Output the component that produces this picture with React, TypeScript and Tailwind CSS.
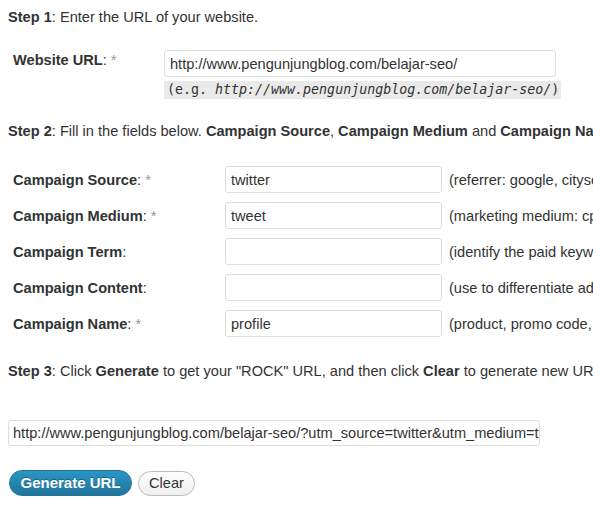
import React from "react";

const rows = [
  { label: "Campaign Source", req: true, value: "twitter", hint: "(referrer: google, citysearch, newsletter4)" },
  { label: "Campaign Medium", req: true, value: "tweet", hint: "(marketing medium: cpc, banner, email)" },
  { label: "Campaign Term", req: false, value: "", hint: "(identify the paid keywords)" },
  { label: "Campaign Content", req: false, value: "", hint: "(use to differentiate ads)" },
  { label: "Campaign Name", req: true, value: "profile", hint: "(product, promo code, or slogan)" },
];

export default function App() {
  return (
    <div
      className="w-[593px] h-[505px] overflow-hidden bg-white text-[14.6px] text-[#333] whitespace-nowrap"
      style={{ fontFamily: '"Liberation Sans", Arial, sans-serif' }}
    >
      <div className="pl-2 pt-[7px]">
        <p className="leading-5">
          <b>Step 1</b>: Enter the URL of your website.
        </p>

        <div className="flex mt-[23px]">
          <div className="w-[156px] shrink-0 pl-[5px] leading-5">
            <b>Website URL</b>: <span className="text-[#999]">*</span>
          </div>
          <div className="flex flex-col shrink-0">
            <div className="w-[392px] h-[27px] border border-[#dddddd] rounded-[3px] px-[5px] flex items-center leading-5">
              http://www.pengunjungblog.com/belajar-seo/
            </div>
            <div
              className="mt-[4px] h-[18px] w-[397px] bg-[#eaeaea] pl-[3px] leading-[18px] text-[13.3px] text-[#333]"
              style={{ fontFamily: '"DejaVu Sans Mono", "Liberation Mono", monospace' }}
            >
              (e.g. <em className="italic">http://www.pengunjungblog.com/belajar-seo/</em>)
            </div>
          </div>
        </div>

        <p className="leading-5 mt-[22px]">
          <b>Step 2</b>: Fill in the fields below. <b>Campaign Source</b>, <b>Campaign Medium</b> and{" "}
          <b>Campaign Name</b> are required.
        </p>

        <div className="flex flex-col gap-[9px] mt-[25px]">
          {rows.map((r) => (
            <div key={r.label} className="flex items-center h-[27px]">
              <div className="w-[217px] shrink-0 pl-[5px] leading-5">
                <b>{r.label}</b>: {r.req && <span className="text-[#999]">*</span>}
              </div>
              <div className="w-[217px] h-[27px] border border-[#dddddd] rounded-[3px] px-[5px] flex items-center leading-5 shrink-0">
                {r.value}
              </div>
              <div className="pl-[7px] leading-5 shrink-0">{r.hint}</div>
            </div>
          ))}
        </div>

        <p className="leading-5 mt-[24px]">
          <b>Step 3</b>: Click <b>Generate</b> to get your "ROCK" URL, and then click <b>Clear</b> to generate new URL.
        </p>

        <div className="mt-[39px] w-[532px] h-[26px] border border-[#dddddd] rounded-[3px] px-[4px] flex items-center overflow-hidden leading-5">
          http://www.pengunjungblog.com/belajar-seo/?utm_source=twitter&amp;utm_medium=tweet&amp;utm_campaign=profile
        </div>

        <div className="flex items-center gap-[6px] mt-[24px] ml-px">
          <button
            className="h-[26px] w-[123px] rounded-full border border-[#21759b] bg-gradient-to-b from-[#2a95c5] to-[#21759b] text-white font-bold text-[15px] leading-5"
            style={{ textShadow: "0 -1px 0 rgba(0,0,0,0.3)" }}
          >
            Generate URL
          </button>
          <button className="h-[25px] w-[57px] rounded-full border border-[#bbbbbb] bg-gradient-to-b from-[#fefefe] to-[#f0f0f0] text-[#333] text-[14.6px] leading-5">
            Clear
          </button>
        </div>
      </div>
    </div>
  );
}
